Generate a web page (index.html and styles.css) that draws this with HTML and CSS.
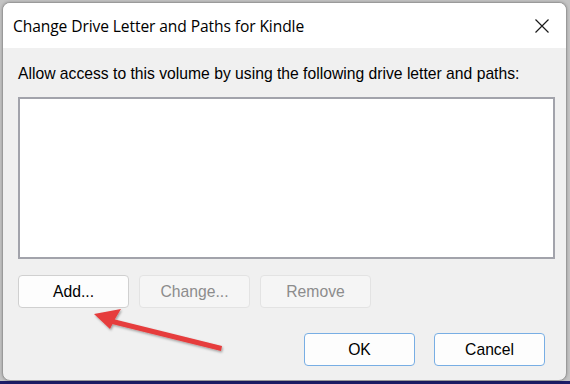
FILE: index.html
```html
<!DOCTYPE html>
<html>
<head>
<meta charset="utf-8">
<link rel="stylesheet" href="styles.css">
</head>
<body>
<div class="dialog">
  <div class="titlebar">
    <span class="title">Change Drive Letter and Paths for Kindle</span>
    <svg class="close" width="16" height="16" viewBox="0 0 16 16"><path d="M1.5 1.5 L14.5 14.5 M14.5 1.5 L1.5 14.5" stroke="#1a1a1a" stroke-width="1.2" fill="none"/></svg>
  </div>
  <div class="body">
    <div class="label">Allow access to this volume by using the following drive letter and paths:</div>
    <div class="listbox"></div>
    <div class="row1">
      <div class="btn">Add...</div>
      <div class="btn disabled">Change...</div>
      <div class="btn disabled">Remove</div>
    </div>
    <div class="row2">
      <div class="btn primary">OK</div>
      <div class="btn primary">Cancel</div>
    </div>
    <svg class="arrow" width="160" height="60" viewBox="0 0 160 60">
      <defs>
        <filter id="sh" x="-10%" y="-30%" width="130%" height="160%">
          <feDropShadow dx="1" dy="1.5" stdDeviation="1" flood-color="#000" flood-opacity="0.35"/>
        </filter>
      </defs>
      <g filter="url(#sh)" fill="#e63d3d">
        <path d="M139 41 L30 14 L29 19 L138 46 Z"/>
        <path d="M11 9 L38 4 L32 14 L27 24 Z"/>
      </g>
    </svg>
  </div>
</div>
</body>
</html>
```
FILE: styles.css
```css
html, body {
  margin: 0;
  padding: 0;
}
body {
  width: 570px;
  height: 384px;
  overflow: hidden;
  background: linear-gradient(to bottom, #c4c4c4 0, #c4c4c4 381px, #1c1c66 381px);
  font-family: "Liberation Sans", Arial, sans-serif;
}
.dialog {
  margin: 2px 0 0 2px;
  width: 563px;
  height: 377px;
  border: 1px solid #9a9a9a;
  border-radius: 8px;
  background: #f0f0f0;
  overflow: hidden;
  display: flex;
  flex-direction: column;
  box-shadow: 0 0 3px rgba(0,0,0,0.25);
}
.titlebar {
  height: 45px;
  background: #ffffff;
  display: flex;
  align-items: center;
  justify-content: space-between;
  padding: 0 16px 0 10px;
  flex-shrink: 0;
}
.title {
  font-family: "Open Sans", "Noto Sans", sans-serif;
  font-size: 15.6px;
  color: #000;
  letter-spacing: -0.1px;
}
.close {
  display: block;
}
.body {
  position: relative;
  flex: 1;
  padding: 17px 11px 0 15px;
  display: flex;
  flex-direction: column;
}
.label {
  font-size: 15.7px;
  line-height: 18px;
  color: #000;
}
.listbox {
  margin-top: 14px;
  height: 158px;
  background: #fff;
  border: 2px solid #a2a3ab;
}
.row1 {
  margin-top: 16px;
  display: flex;
  gap: 10px;
}
.btn {
  width: 109px;
  height: 31px;
  border: 1px solid #d0d0d0;
  border-radius: 4px;
  background: #fdfdfd;
  font-size: 15.7px;
  color: #000;
  display: flex;
  align-items: center;
  justify-content: center;
}
.btn.disabled {
  background: #f5f5f5;
  border-color: #e3e3e3;
  color: #8c8c8c;
}
.row2 {
  margin-top: 25px;
  display: flex;
  justify-content: flex-end;
  gap: 19px;
  padding-right: 10px;
}
.btn.primary {
  border-color: #78aee4;
  background: #fdfdfd;
}
.arrow {
  position: absolute;
  left: 80px;
  top: 257px;
}
```
